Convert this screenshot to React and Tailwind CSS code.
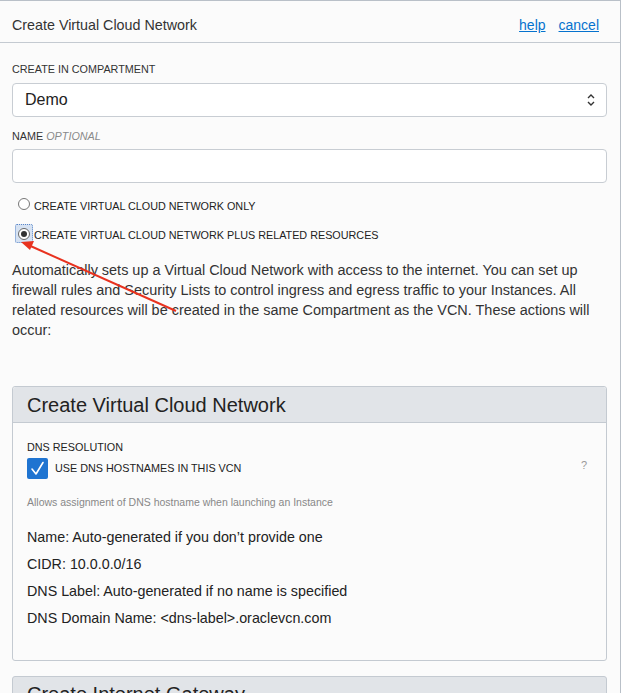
import React from "react";

export default function App() {
  const font = { fontFamily: '"Liberation Sans", Arial, sans-serif' };
  return (
    <div className="relative w-[621px] min-h-[693px] bg-[#fbfbfb] border-t border-r border-[#b9c0c8] text-[#333]" style={font}>
      {/* header */}
      <div className="h-[42px] flex items-center justify-between pl-3 pr-[21px] pt-[8px] border-b border-[#c4cad1]">
        <div className="text-[14.3px] text-[#333]">Create Virtual Cloud Network</div>
        <div className="flex gap-[13px] text-[14px]">
          <a className="text-[#0572ce] underline">help</a>
          <a className="text-[#0572ce] underline">cancel</a>
        </div>
      </div>

      <div className="px-3 pt-[20px]">
        <div className="text-[10.8px] leading-[13px] uppercase text-[#333]">Create in compartment</div>
        <div className="mt-[7px] h-[34px] w-[595px] rounded-[4px] border border-[#c8cdd3] bg-white flex items-center justify-between pl-[12px] pr-[10px]">
          <span className="text-[16px] text-[#222]">Demo</span>
          <svg width="10" height="16" viewBox="0 0 10 16" fill="none" stroke="#333" strokeWidth="1.4">
            <path d="M2 6 L5 3 L8 6" />
            <path d="M2 10 L5 13 L8 10" />
          </svg>
        </div>

        <div className="mt-[13px] text-[10.8px] leading-[13px] text-[#333]">
          NAME <span className="italic text-[#8a8a8a]">OPTIONAL</span>
        </div>
        <div className="mt-[6px] h-[34px] w-[595px] rounded-[4px] border border-[#c8cdd3] bg-white" />

        <div className="mt-[14px] flex items-end h-[16px]">
          <div className="ml-[6px] mb-[3px] w-[12px] h-[12px] rounded-full border border-[#777] bg-white" />
          <span className="ml-[4px] text-[10.8px] leading-[13px] text-[#222]">CREATE VIRTUAL CLOUD NETWORK ONLY</span>
        </div>
        <div className="mt-[11px] flex items-center h-[19px]">
          <div className="ml-[3px] w-[18px] h-[19px] rounded-[2px] border border-dotted border-[#5a86c8] bg-[#d6e2f2] flex items-center justify-center">
            <div className="w-[12px] h-[12px] rounded-full border border-[#666] bg-white flex items-center justify-center">
              <div className="w-[6px] h-[6px] rounded-full bg-[#333]" />
            </div>
          </div>
          <span className="ml-[1px] mt-[3px] text-[10.8px] text-[#222]">CREATE VIRTUAL CLOUD NETWORK PLUS RELATED RESOURCES</span>
        </div>

        <p className="mt-[17px] w-[595px] text-[14.45px] leading-[20px] text-[#333]">
          Automatically sets up a Virtual Cloud Network with access to the internet. You can set up firewall rules and Security Lists to control ingress and egress traffic to your Instances. All related resources will be created in the same Compartment as the VCN. These actions will occur:
        </p>

        {/* card 1 */}
        <div className="mt-[46px] w-[595px] rounded-[3px] border border-[#c4cad1] bg-[#fbfbfb]">
          <div className="h-[36px] bg-[#e1e4e8] border-b border-[#c4cad1] flex items-center pl-[14px] rounded-t-[3px]">
            <span className="text-[20px] text-[#222]">Create Virtual Cloud Network</span>
          </div>
          <div className="px-[14px] pt-[18px] pb-[34px]">
            <div className="text-[10.8px] leading-[13px] text-[#222]">DNS RESOLUTION</div>
            <div className="mt-[4px] flex items-center">
              <div className="w-[21px] h-[21px] rounded-[2px] bg-[#1f74d1] flex items-center justify-center">
                <svg width="15" height="15" viewBox="0 0 15 15" fill="none" stroke="white" strokeWidth="1.6" strokeLinecap="round" strokeLinejoin="round">
                  <path d="M2 8 L6 13 L13 1.5" />
                </svg>
              </div>
              <span className="ml-[7px] text-[10.8px] text-[#222]">USE DNS HOSTNAMES IN THIS VCN</span>
              <span className="ml-auto mr-[5px] -mt-[6px] text-[11px] text-[#999]">?</span>
            </div>
            <div className="mt-[17px] text-[10.5px] leading-[12px] text-[#888]">Allows assignment of DNS hostname when launching an Instance</div>
            <div className="mt-[21px] flex flex-col gap-[11px] text-[14.3px] leading-[16px] text-[#222]">
              <div>Name: Auto-generated if you don’t provide one</div>
              <div>CIDR: 10.0.0.0/16</div>
              <div>DNS Label: Auto-generated if no name is specified</div>
              <div>DNS Domain Name: &lt;dns-label&gt;.oraclevcn.com</div>
            </div>
          </div>
        </div>

        {/* card 2 */}
        <div className="mt-[15px] w-[595px] rounded-t-[3px] border border-[#c4cad1] bg-[#e1e4e8] h-[36px] flex items-center pl-[14px]">
          <span className="text-[20px] text-[#222]">Create Internet Gateway</span>
        </div>
      </div>

      {/* red annotation arrow */}
      <svg className="absolute left-0 top-0 pointer-events-none" width="622" height="693">
        <line x1="176" y1="310" x2="26" y2="243" stroke="#e8321f" strokeWidth="2" />
        <path d="M21 241 L34 240 L30 249 Z" fill="#e8321f" />
      </svg>
    </div>
  );
}
